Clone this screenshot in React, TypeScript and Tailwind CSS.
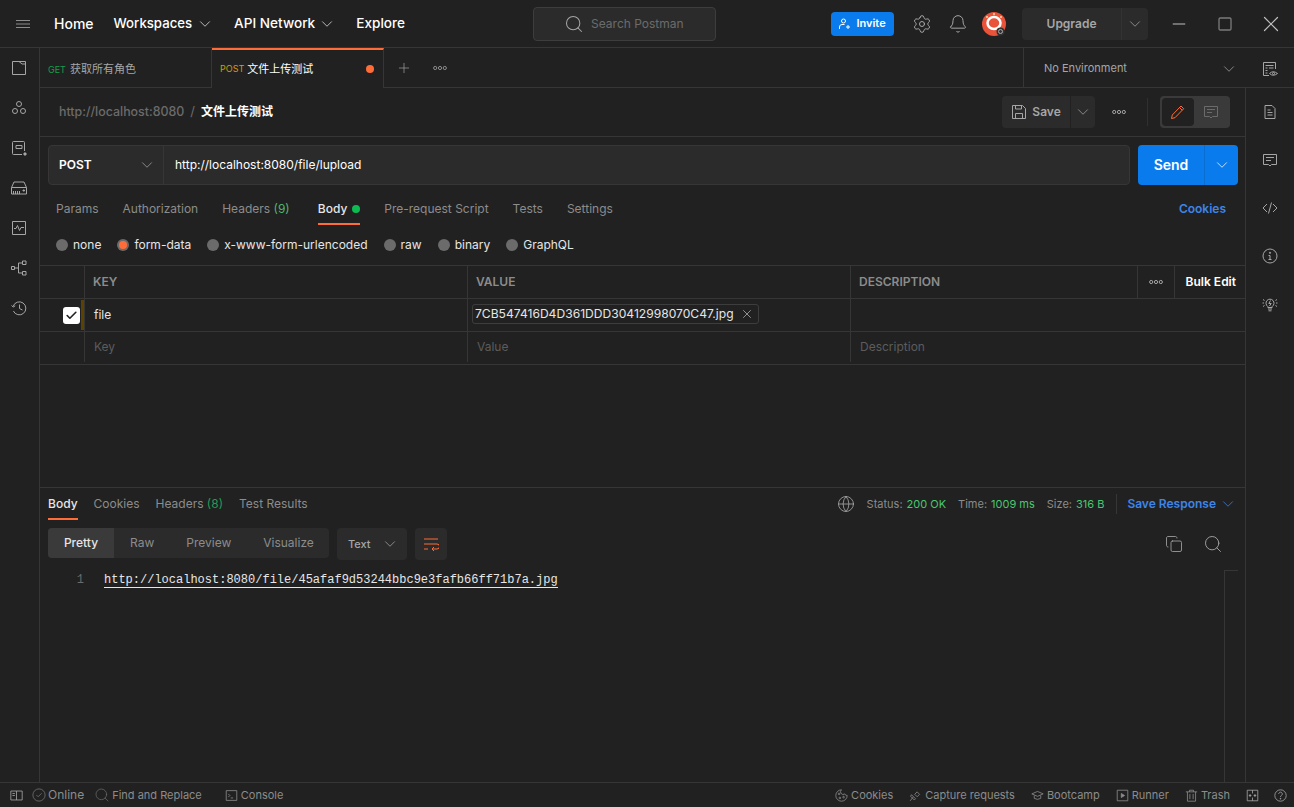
import { Bell, ChevronDown, Copy, Globe, Minus, Plus, Search, Settings, Square, X, Check } from "lucide-react";
import type { ReactNode } from "react";

const Ico = ({ size = 16, className = "", children }: { size?: number; className?: string; children: ReactNode }) => (
  <svg width={size} height={size} viewBox="0 0 16 16" fill="none" stroke="currentColor" strokeWidth="1" className={`shrink-0 ${className}`}>
    {children}
  </svg>
);

const Dots = ({ className = "" }: { className?: string }) => (
  <svg width="14" height="6" viewBox="0 0 14 6" fill="none" stroke="currentColor" className={`shrink-0 ${className}`}>
    <circle cx="2.2" cy="3" r="1.6" />
    <circle cx="7" cy="3" r="1.6" />
    <circle cx="11.8" cy="3" r="1.6" />
  </svg>
);

const leftIcons = [
  <><path d="M1.500 1.500h13v13h-13z" /><path d="M8 1.500l3 2.500h3.500" /></>,
  <><circle cx="8" cy="4" r="2.500" /><circle cx="4" cy="11" r="2.500" /><circle cx="12" cy="11" r="2.500" /></>,
  <><path d="M13.500 11V2.500a1 1 0 0 0-1-1h-10a1 1 0 0 0-1 1v11a1 1 0 0 0 1 1H11" /><path d="M5 5.500h6v3H5z" /><path d="M13 13h2v2h-2z" fill="currentColor" /></>,
  <><path d="M0.500 7.500l2.500-5.500h10l2.500 5.500v6.500h-15z" /><path d="M0.500 7.500h15" /><path d="M2.500 11v3M4.500 11v3M6.500 11v3M8.500 11v3" /><path d="M12 10h1.500v1H12z" fill="currentColor" /></>,
  <><path d="M1.500 1.500h13v13h-13z" /><path d="M3 8.500h2l1.500-3 2 5 1.500-3h3" /></>,
  <><path d="M0.500 6.500h3v3h-3zM11.500 1h3.500v3.500h-3.500zM11.500 11.500h3.500v3.500h-3.500z" /><path d="M3.500 8h4M7.500 3v10M7.500 3h4M7.500 13h4" /></>,
  <><path d="M2.200 6.200a6.500 6.500 0 1 1 .2 4.800" /><path d="M0.500 5.500l1.700 1.500 2-1.200" /><path d="M8.500 4.500v4l3 1.500" /></>,
];

const rightIcons = [
  <><path d="M3 1.500h7l3 3v10H3z" /><path d="M5.500 6h3M5.500 8.500h5M5.500 11h5" /></>,
  <><path d="M1.500 2.500h13v10H9.500L8 14l-1.500-1.500h-5z" /><path d="M4 5.500h8M4 8.500h5" /></>,
  <path d="M5 4L1 8l4 4M11 4l4 4-4 4M9.500 2.500l-3 11" />,
  <><circle cx="8" cy="8" r="7" /><path d="M6.500 7.500H8v4M6.500 11.500h3" /><circle cx="8" cy="4.800" r=".6" fill="currentColor" /></>,
  <>
    <path d="M5.800 11.500V10.500a4 4 0 1 1 4.400 0v1z" />
    <path d="M6 13h4M6.500 14.800h3" />
    <path d="M8.500 4.500L6.800 7.500h2.400L7.500 10" />
    <path d="M1 3.500l1.500 1M15 3.500l-1.500 1M0.500 7h1.500M14 7h1.500M1 10.500l1.500-1M15 10.500l-1.500-1" />
  </>,
];

const Radio = ({ label, active }: { label: string; active?: boolean }) => (
  <div className="flex items-center gap-[5px]">
    <span className="flex h-3 w-3 items-center justify-center rounded-full bg-[#6b6b6b]">
      {active && <span className="h-2 w-2 rounded-full bg-[#ff6c37]" />}
    </span>
    <span className="text-xs text-[#e6e6e6]">{label}</span>
  </div>
);

const StatusItem = ({ icon, label, ml }: { icon: ReactNode; label: string; ml: string }) => (
  <div className={`flex items-center gap-[3px] ${ml}`}>
    <span className="text-[#8c8c8c]">{icon}</span>
    <span>{label}</span>
  </div>
);

export default function App() {
  return (
    <div
      className="flex h-[807px] w-[1294px] flex-col overflow-hidden bg-[#212121] text-[#a6a6a6]"
      style={{ fontFamily: 'Inter, "Noto Sans CJK SC", sans-serif' }}
    >
      {/* title bar */}
      <header className="flex h-[48px] shrink-0 items-center border-b border-[#363636]">
        <svg width="14" height="8" viewBox="0 0 14 8" stroke="#8c8c8c" className="ml-4 shrink-0">
          <path d="M0 .5h14M0 4h14M0 7.500h14" />
        </svg>
        <span className="ml-6 text-sm font-medium text-white">Home</span>
        <span className="ml-5 text-[13.2px] font-medium text-white">Workspaces</span>
        <ChevronDown size={18} strokeWidth={1.25} className="ml-1 text-[#c0c0c0]" />
        <span className="ml-5 text-[13.6px] font-medium text-white">API Network</span>
        <ChevronDown size={18} strokeWidth={1.25} className="ml-[3px] text-[#c0c0c0]" />
        <span className="ml-5 text-[13.6px] font-medium text-white">Explore</span>
        <div className="ml-[128px] flex h-[34px] w-[183px] items-center rounded-[4px] border border-[#3d3d3d] bg-[#2b2b2b] pl-[30px]">
          <Search size={20} strokeWidth={1.25} className="text-[#a6a6a6]" />
          <span className="ml-[7px] text-xs text-[#6b6b6b]">Search Postman</span>
        </div>
        <div className="ml-[115px] flex h-6 w-[63px] items-center justify-center gap-[5px] rounded-[4px] bg-[#097bed] text-[11px] font-semibold text-white">
          <svg width="12" height="12" viewBox="0 0 12 12" fill="none" stroke="white">
            <circle cx="4.500" cy="3" r="2" />
            <path d="M.5 11V9a2.500 2.500 0 0 1 2.500-2.500h2.500M9 7v4M7 9h4" />
          </svg>
          Invite
        </div>
        <Settings size={20} strokeWidth={1.2} className="ml-[18px] text-[#a6a6a6]" />
        <Bell size={20} strokeWidth={1.2} className="ml-4 text-[#a6a6a6]" />
        <svg width="26" height="26" viewBox="0 0 26 26" className="ml-[13px] shrink-0">
          <circle cx="13" cy="13" r="12" fill="#e8533a" />
          <ellipse cx="13" cy="12" rx="6.500" ry="6" fill="none" stroke="white" strokeWidth="2.500" />
          <circle cx="13" cy="3" r="1" fill="#ffd9a0" />
          <circle cx="6" cy="6" r="1" fill="#ffd9a0" />
          <circle cx="20" cy="6" r="1" fill="#ffd9a0" />
          <circle cx="19.500" cy="20.500" r="4" fill="#333" />
          <circle cx="19.500" cy="20.500" r="2" fill="none" stroke="#aaa" />
        </svg>
        <div className="ml-[15px] flex h-8 w-[126px] items-center rounded-[4px] bg-[#2b2b2b]">
          <span className="w-[99px] text-center text-xs font-semibold text-[#a6a6a6]">Upgrade</span>
          <span className="h-8 w-px bg-[#333]" />
          <ChevronDown size={18} strokeWidth={1} className="ml-1 text-[#a6a6a6]" />
        </div>
        <Minus size={20} strokeWidth={1.2} className="ml-[21px] text-[#c0c0c0]" />
        <Square size={16} strokeWidth={2} className="ml-7 text-[#7a7a7a]" />
        <X size={26} strokeWidth={1.1} className="ml-[25px] text-[#c0c0c0]" />
      </header>

      <div className="flex min-h-0 flex-1">
        {/* left rail */}
        <aside className="flex w-10 shrink-0 flex-col border-r border-[#363636] text-[#a6a6a6]">
          {leftIcons.map((icon, i) => (
            <div key={i} className="flex h-10 items-center justify-center pr-px">
              <Ico>{icon}</Ico>
            </div>
          ))}
        </aside>

        <div className="flex min-w-0 flex-1 flex-col">
          {/* tabs */}
          <div className="flex h-10 shrink-0">
            <div className="flex w-[172px] items-center gap-1 border-t-2 border-r border-b border-t-transparent border-r-[#363636] border-b-[#363636] pt-[2px] pl-2">
              <span className="text-[9px] text-[#1a9c4c]">GET</span>
              <span className="text-[11px] text-[#a6a6a6]">获取所有角色</span>
            </div>
            <div className="flex w-[172px] items-center border-t-2 border-r border-t-[#ff6c37] border-r-[#363636] pl-2">
              <span className="text-[9px] text-[#d99a0c]">POST</span>
              <span className="ml-[3px] text-[11px] text-white">文件上传测试</span>
              <span className="ml-[53px] h-2 w-2 rounded-full bg-[#ff6c37]" />
            </div>
            <div className="flex flex-1 items-center border-b border-[#363636]">
              <Plus size={16} strokeWidth={1} className="ml-[12px] text-[#a6a6a6]" />
              <Dots className="ml-[21px] text-[#8c8c8c]" />
              <div className="ml-[576px] flex h-full flex-1 items-center border-l border-[#363636] pt-[2px] pl-5">
                <span className="whitespace-nowrap text-[11px] text-[#a6a6a6]">No Environment</span>
                <ChevronDown size={18} strokeWidth={1} className="ml-[93px] text-[#a6a6a6]" />
                <Ico className="ml-6 text-[#a6a6a6]">
                  <path d="M7 14.500H1.500v-13h12V8" />
                  <path d="M3.500 4.500h8M3.500 7h2M7 7h4.500M3.500 9.500h2M3.500 12h2" />
                  <path d="M7.500 12.500q3.500-3.500 8 0q-4.500 3.500-8 0z" />
                  <circle cx="11.500" cy="12.500" r="1" />
                </Ico>
              </div>
            </div>
          </div>

          <div className="flex min-h-0 flex-1">
            <main className="flex w-[1206px] shrink-0 flex-col border-r border-[#363636]">
              {/* request name */}
              <div className="flex h-[49px] shrink-0 items-center border-b border-[#363636] pl-[19px]">
                <span className="text-[12.4px] font-medium text-[#6b6b6b]">http://localhost:8080</span>
                <span className="ml-[6px] text-[13px] text-[#6b6b6b]">/</span>
                <span className="ml-[6px] text-xs font-bold text-white">文件上传测试</span>
                <div className="ml-[729px] flex h-8 w-[68px] items-center justify-center gap-[5px] rounded-l-[4px] bg-[#2b2b2b] text-xs font-semibold text-[#a6a6a6]">
                  <Ico>
                    <path d="M1.500 1.500h10l3 3v10h-13z" />
                    <path d="M4.500 1.500v3.500h6v-3.500M4.500 14.500v-5h7v5" />
                  </Ico>
                  Save
                </div>
                <div className="ml-px flex h-8 w-6 items-center justify-center rounded-r-[4px] bg-[#2b2b2b]">
                  <ChevronDown size={18} strokeWidth={1} />
                </div>
                <Dots className="ml-[17px] text-[#a6a6a6]" />
                <span className="ml-[21px] h-7 w-px bg-[#303030]" />
                <div className="ml-[12px] flex h-8 w-[70px] items-center rounded-[4px] bg-[#3a3a3a] p-[2px]">
                  <div className="flex h-7 w-8 items-center justify-center rounded-[4px] bg-[#212121]">
                    <Ico className="text-[#ff6c37]">
                      <path d="M1.500 14.500l.8-3.500 8.700-9 2.700 2.700-8.700 9z" />
                      <path d="M9.500 3.500l2.700 2.700" />
                    </Ico>
                  </div>
                  <div className="flex flex-1 items-center justify-center text-[#6b6b6b]">
                    <Ico>{rightIcons[1]}</Ico>
                  </div>
                </div>
              </div>

              {/* url bar */}
              <div className="flex shrink-0 gap-2 pt-2 pr-[7px] pl-2">
                <div className="flex h-10 w-[1082px] shrink-0 rounded-[4px] border border-[#363636] bg-[#2b2b2b]">
                  <div className="flex w-[115px] items-center justify-between border-r border-[#363636] pr-[7px] pl-[10px]">
                    <span className="text-xs font-semibold text-white">POST</span>
                    <ChevronDown size={18} strokeWidth={1} className="text-[#a6a6a6]" />
                  </div>
                  <span className="flex items-center pl-[11px] text-xs text-white">http://localhost:8080/file/lupload</span>
                </div>
                <div className="flex h-10 w-[100px] shrink-0 rounded-[4px] bg-[#097bed] text-white">
                  <span className="flex w-[67px] items-center justify-center border-r border-[#0a6ed1] text-sm font-semibold">Send</span>
                  <span className="flex flex-1 items-center justify-center">
                    <ChevronDown size={18} strokeWidth={1} />
                  </span>
                </div>
              </div>

              {/* request tabs */}
              <div className="flex h-[40px] shrink-0 items-start pt-4 pr-[19px] pl-4 text-xs text-[#8c8c8c]">
                <span>Params</span>
                <span className="ml-6">Authorization</span>
                <span className="ml-6">
                  Headers <span className="text-[#4fb573]">(9)</span>
                </span>
                <div className="ml-7 flex h-[24px] items-start gap-[5px] border-b-2 border-[#ff6c37]">
                  <span className="font-medium text-[#e6e6e6]">Body</span>
                  <span className="mt-[4px] h-2 w-2 rounded-full bg-[#0cbb52]" />
                </div>
                <span className="ml-6">Pre-request Script</span>
                <span className="ml-6">Tests</span>
                <span className="ml-6">Settings</span>
                <span className="ml-auto font-semibold text-[#3d85e8]">Cookies</span>
              </div>

              {/* body modes */}
              <div className="mt-[4px] flex h-[36px] shrink-0 items-start gap-4 pt-2 pl-4">
                <Radio label="none" />
                <Radio label="form-data" active />
                <Radio label="x-www-form-urlencoded" />
                <Radio label="raw" />
                <Radio label="binary" />
                <Radio label="GraphQL" />
              </div>

              {/* form table */}
              <div className="flex h-[34px] shrink-0 border-y border-[#363636] text-xs font-semibold text-[#8c8c8c]">
                <div className="w-[45px] border-r border-[#363636]" />
                <div className="flex w-[383px] items-center border-r border-[#363636] pl-2">KEY</div>
                <div className="flex w-[383px] items-center border-r border-[#363636] pl-2">VALUE</div>
                <div className="flex w-[287px] items-center border-r border-[#363636] pl-2">DESCRIPTION</div>
                <div className="flex w-[37px] items-center justify-center border-r border-[#363636]">
                  <Dots className="text-[#a6a6a6]" />
                </div>
                <div className="flex flex-1 items-center justify-end pr-[9px] text-white">Bulk Edit</div>
              </div>
              <div className="flex h-[33px] shrink-0 border-b border-[#363636] text-xs">
                <div className="flex w-[45px] items-center border-r border-[#363636] pl-[23px]">
                  <span className="flex h-[17px] w-[17px] items-center justify-center rounded-[3px] bg-white">
                    <Check size={13} strokeWidth={3} className="text-[#212121]" />
                  </span>
                  <span className="ml-[1px] h-[30px] w-[3px] bg-[#5c4200]" />
                </div>
                <div className="flex w-[383px] items-center border-r border-[#363636] pl-[9px] text-[#e6e6e6]">file</div>
                <div className="flex w-[383px] items-center border-r border-[#363636] pb-[2px] pl-1">
                  <div className="flex h-5 items-center gap-[6px] rounded-[3px] border border-[#3d3d3d] pr-1 pl-[2px] text-[12.1px] text-[#e6e6e6]">
                    7CB547416D4D361DDD30412998070C47.jpg
                    <X size={14} strokeWidth={1.2} className="text-[#c0c0c0]" />
                  </div>
                </div>
              </div>
              <div className="flex h-[33px] shrink-0 border-b border-[#363636] pb-[2px] text-xs text-[#5c5c5c]">
                <div className="w-[45px] border-r border-[#363636]" />
                <div className="flex w-[383px] items-center border-r border-[#363636] pl-[9px]">Key</div>
                <div className="flex w-[383px] items-center border-r border-[#363636] pl-[9px]">Value</div>
                <div className="flex items-center pl-[9px]">Description</div>
              </div>

              {/* response */}
              <div className="mt-[122px] flex min-h-0 flex-1 flex-col border-t border-[#363636]">
                <div className="flex h-[32px] shrink-0 items-start pt-2 pl-2 text-xs text-[#8c8c8c]">
                  <span className="h-[24px] border-b-2 border-[#ff6c37] font-medium text-[#e6e6e6]">Body</span>
                  <span className="ml-4">Cookies</span>
                  <span className="ml-4">
                    Headers <span className="text-[#1f9d55]">(8)</span>
                  </span>
                  <span className="ml-4">Test Results</span>
                  <div className="-mt-[2px] ml-auto flex items-center pr-2 text-[11px]">
                    <Globe size={18} strokeWidth={1.1} className="mr-3 text-[#a6a6a6]" />
                    <span className="text-[#8c8c8c]">Status:</span>
                    <span className="ml-1 text-[#49c76f]">200 OK</span>
                    <span className="ml-3 text-[#8c8c8c]">Time:</span>
                    <span className="ml-1 text-[#49c76f]">1009 ms</span>
                    <span className="ml-3 text-[#8c8c8c]">Size:</span>
                    <span className="ml-1 text-[#49c76f]">316 B</span>
                    <span className="ml-3 h-[20px] w-px bg-[#363636]" />
                    <span className="ml-[10px] text-xs font-semibold text-[#3d85e8]">Save Response</span>
                    <ChevronDown size={18} strokeWidth={1} className="ml-[3px] text-[#3d85e8]" />
                  </div>
                </div>

                <div className="mt-2 flex shrink-0 items-start pl-2">
                  <div className="flex h-[30px] w-[281px] items-center rounded-[4px] bg-[#2b2b2b] text-xs text-[#8c8c8c]">
                    <span className="flex h-full w-[66px] items-center justify-center rounded-l-[4px] bg-[#3a3a3a] font-medium text-[#e6e6e6]">Pretty</span>
                    <span className="ml-4">Raw</span>
                    <span className="ml-8">Preview</span>
                    <span className="ml-8">Visualize</span>
                  </div>
                  <div className="ml-2 flex h-8 w-[70px] items-center rounded-[4px] bg-[#2b2b2b] pl-[11px] text-[11px] font-medium text-[#a6a6a6]">
                    Text
                    <ChevronDown size={18} strokeWidth={1} className="ml-[10px]" />
                  </div>
                  <div className="ml-2 flex h-8 w-8 items-center justify-center rounded-[4px] bg-[#2b2b2b]">
                    <Ico className="text-[#ff6c37]">
                      <path d="M1 3h14M1 8h13a2.300 2.300 0 0 1 0 5H9M11 11l-2 2 2 2M1 13h4" />
                    </Ico>
                  </div>
                  <Copy size={18} strokeWidth={1.1} className="mt-[7px] ml-[718px] text-[#a6a6a6]" />
                  <Search size={20} strokeWidth={1.1} className="mt-[6px] ml-5 text-[#a6a6a6]" />
                </div>

                <div className="mt-[10px] flex min-h-0 flex-1">
                  <div className="flex flex-1 items-start pt-[3px]">
                    <span className="w-[44px] text-right font-['Liberation_Mono',monospace] text-xs leading-[14px] text-[#6b6b6b]">1</span>
                    <a className="ml-[20px] border-b border-[#e6e6e6] font-['Liberation_Mono',monospace] text-xs leading-[14px] text-[#e6e6e6]">
                      http://localhost:8080/file/45afaf9d53244bbc9e3fafb66ff71b7a.jpg
                    </a>
                  </div>
                  <div className="mr-[7px] w-[14px] border-t border-l border-[#363636]" />
                </div>
              </div>
            </main>

            {/* right rail */}
            <aside className="flex flex-1 flex-col text-[#a6a6a6]">
              {rightIcons.map((icon, i) => (
                <div key={i} className="flex h-12 items-center justify-center">
                  <Ico>{icon}</Ico>
                </div>
              ))}
            </aside>
          </div>
        </div>
      </div>

      {/* status bar */}
      <footer className="flex h-[25px] shrink-0 items-center border-t border-[#363636] text-[11px] text-[#8c8c8c]">
        <Ico size={13} className="ml-[10px] text-[#a6a6a6]">
          <path d="M1 2.500h14v11H1zM8 2.500v11M3 5.500h3M3 8h3" />
        </Ico>
        <Ico size={14} className="ml-[9px] text-[#6b6b6b]">
          <circle cx="8" cy="8" r="7" />
          <path d="M5 8l2 2 4-4" />
        </Ico>
        <span className="ml-[2px] text-xs">Online</span>
        <Search size={16} strokeWidth={1.1} className="ml-[10px] text-[#6b6b6b]" />
        <span className="ml-[2px]">Find and Replace</span>
        <StatusItem
          ml="ml-[23px]"
          label="Console"
          icon={
            <Ico size={13}>
              <path d="M1.500 2h13v12h-13zM4 6l2 2-2 2M7 11h3" />
            </Ico>
          }
        />
        <div className="ml-auto flex items-center pr-[7px]">
          <StatusItem
            ml=""
            label="Cookies"
            icon={
              <Ico size={13}>
                <path d="M8 1a7 7 0 1 0 7 7 3 3 0 0 1-3-2 3 3 0 0 1-4-5z" />
                <circle cx="5" cy="6" r="1" />
                <circle cx="6" cy="11" r="1" />
                <circle cx="10.500" cy="10" r="1" />
              </Ico>
            }
          />
          <StatusItem
            ml="ml-[16px]"
            label="Capture requests"
            icon={
              <Ico size={13}>
                <path d="M3 7l5 5-1.500 1.500L2 9zM5 10l-3.500 4.500M7 6.500l3-3 3 3-3 3z" />
              </Ico>
            }
          />
          <StatusItem
            ml="ml-[16px]"
            label="Bootcamp"
            icon={
              <Ico size={13}>
                <path d="M8 3l7 3-7 3-7-3zM4 8v3.500q4 2.500 8 0V8" />
              </Ico>
            }
          />
          <StatusItem
            ml="ml-[16px]"
            label="Runner"
            icon={
              <Ico size={13}>
                <path d="M1.500 1.500h13v13h-13z" />
                <path d="M6.500 5.500l4 2.500-4 2.500z" fill="currentColor" />
              </Ico>
            }
          />
          <StatusItem
            ml="ml-[16px]"
            label="Trash"
            icon={
              <Ico size={13}>
                <path d="M1 3.500h14M5.500 3.500V1.500h5v2M3 3.500v11.500h10V3.500M6 6v6.500M10 6v6.500" />
              </Ico>
            }
          />
          <Ico size={13} className="ml-[16px] text-[#a6a6a6]">
            <path d="M1.500 1.500h13v13h-13zM8 1.500v4M8 10.500v4" />
            <circle cx="5" cy="8" r="1" fill="currentColor" />
            <circle cx="11" cy="8" r="1" fill="currentColor" />
          </Ico>
          <Ico size={13} className="ml-[15px] text-[#a6a6a6]">
            <circle cx="8" cy="8" r="7" />
            <path d="M5.800 6a2.200 2.200 0 1 1 3.400 1.900c-.8.5-1.200 1-1.200 2" />
            <circle cx="8" cy="12" r=".5" fill="currentColor" />
          </Ico>
        </div>
      </footer>
    </div>
  );
}
